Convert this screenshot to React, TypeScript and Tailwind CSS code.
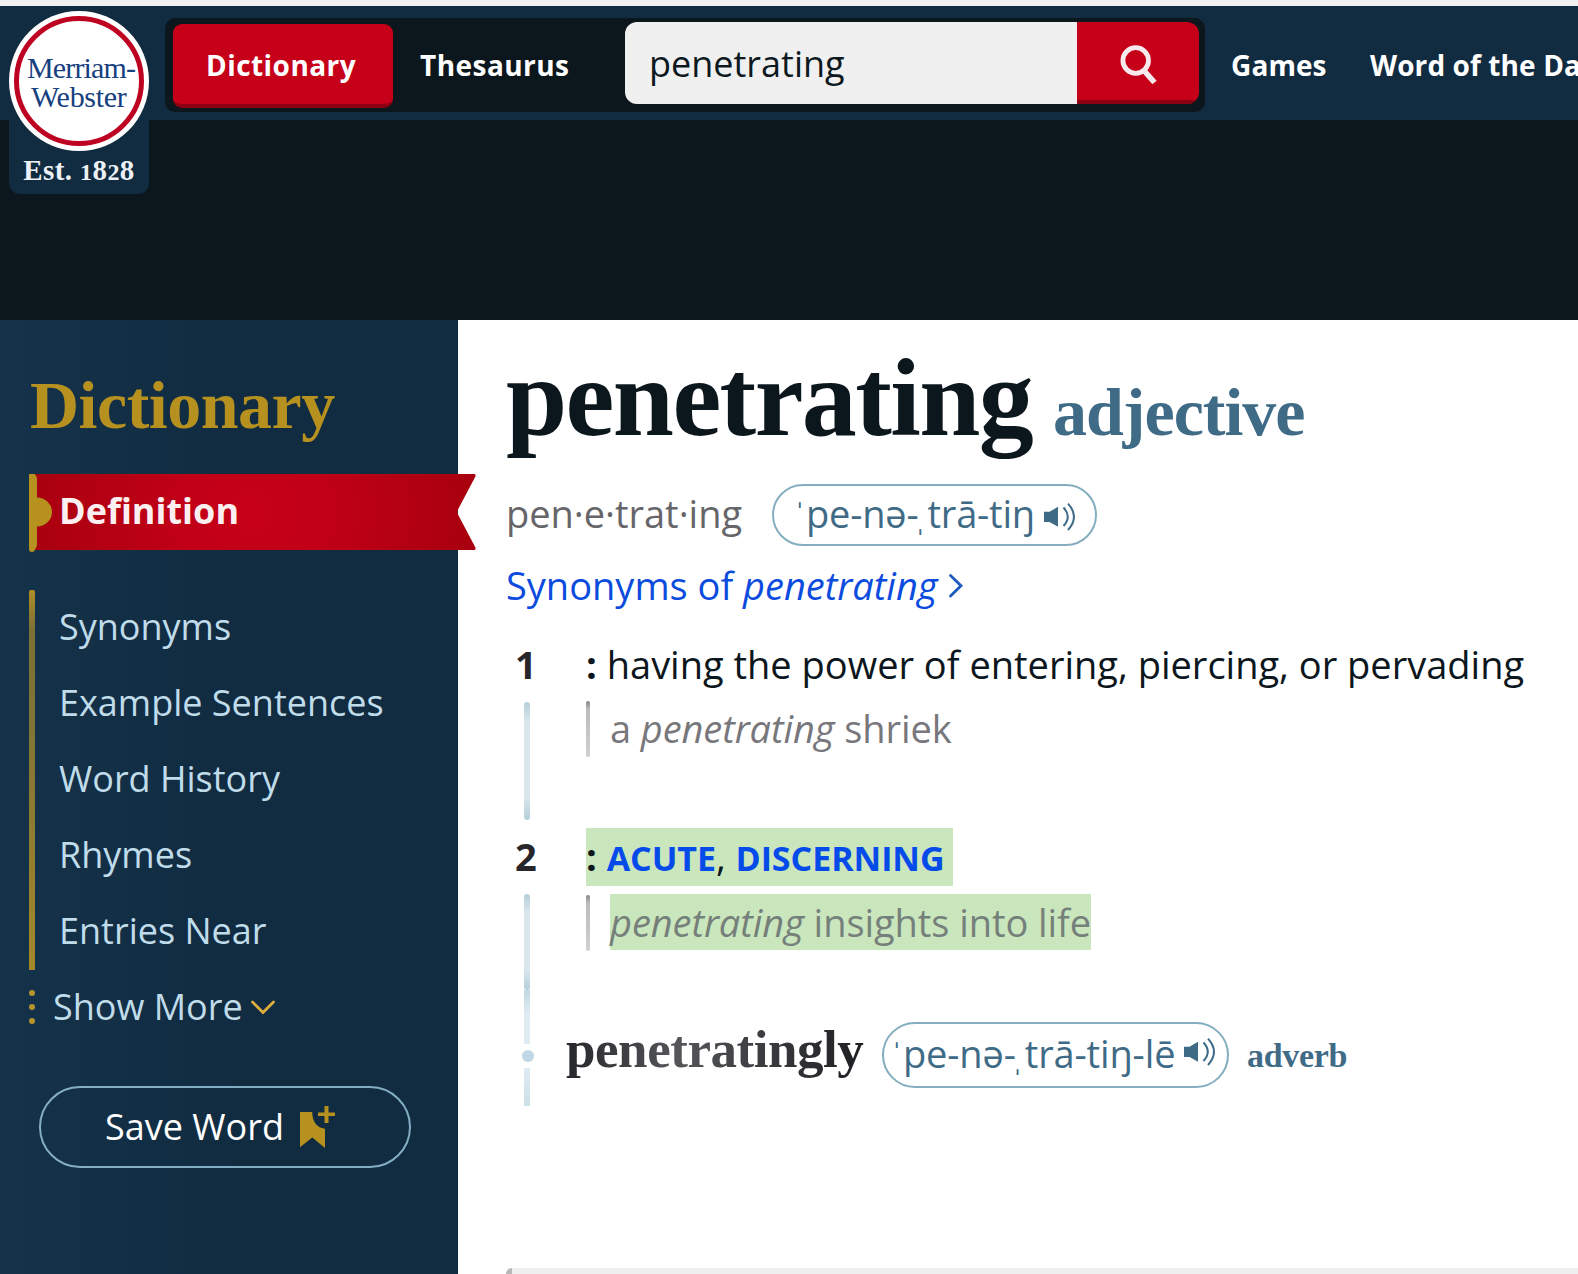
import React from "react";

const sideLinks = ["Synonyms", "Example Sentences", "Word History", "Rhymes", "Entries Near"];

function Speaker({ className }: { className: string }) {
  return (
    <svg className={className} width="34" height="30" viewBox="0 0 34 30" fill="none">
      <path d="M1 9.8H6.5L15 4.8V24.8L6.5 20H1Z" fill="#3f6b87" />
      <path d="M20.5 5.5Q29 14.7 20.5 24" stroke="#3f6b87" strokeWidth="2" />
      <path d="M25 1.6Q37 14.7 25 28" stroke="#3f6b87" strokeWidth="2" />
    </svg>
  );
}

function Pron({ tail }: { tail: string }) {
  return (
    <span>
      <span className="inline-block w-2 align-[9px] text-[22px] leading-none">ˈ</span>pe-nə-
      <span className="inline-block w-[9px] align-[-3px] text-[22px] leading-none">ˌ</span>
      {tail}
    </span>
  );
}

function Logo() {
  return (
    <div className="ml-[9px] flex h-[188px] w-[140px] shrink-0 flex-col items-center rounded-b-[11px] bg-[#112b40] pt-[5px]">
      <div className="flex h-[140px] w-[140px] shrink-0 items-center justify-center rounded-full bg-white">
        <div className="flex h-[130px] w-[130px] flex-col items-start rounded-full border-[5px] border-[#bd0321] pt-[32px] font-['Liberation_Serif',serif] text-[30px] leading-[29px] font-normal whitespace-nowrap text-[#17407f]">
          <span className="ml-[8px] tracking-[-0.85px]">Merriam-</span>
          <span className="ml-[12px] tracking-[-0.3px]">Webster</span>
        </div>
      </div>
      <div className="mt-[1px] whitespace-nowrap font-['Liberation_Serif',serif] text-[29px] leading-[36px] font-bold tracking-[0.4px] text-[#edf1f6]">
        Est. <span className="text-[24px]">1</span>8<span className="text-[24px]">2</span>8
      </div>
    </div>
  );
}

function Header() {
  return (
    <header className="flex h-[114px] shrink-0 items-start bg-[#112b40] text-[28px] font-bold tracking-[0.45px] whitespace-nowrap text-white">
      <Logo />
      <div className="mt-3 ml-4 flex h-[94px] w-[1040px] shrink-0 rounded-[10px] bg-[#0c161d]">
        <div className="mt-[6px] ml-2 h-[84px] w-[220px] rounded-[9px] border-b-4 border-[#8b0012] bg-[#c60018] pt-[1px] pl-[33px] leading-[80px]">
          Dictionary
        </div>
        <div className="mt-[6px] w-[232px] pt-[1px] pl-[27px] leading-[80px]">Thesaurus</div>
        <div className="mt-1 flex h-[82px] w-[574px] overflow-hidden rounded-[12px]">
          <div className="w-[452px] bg-[#f0f0f0] pl-[24px] text-[36px] leading-[84px] font-normal tracking-normal text-[#0d1820]">
            penetrating
          </div>
          <div className="flex-1 border-b-4 border-[#8b0012] bg-[#c60018]">
            <svg width="122" height="78" viewBox="0 0 122 78" fill="none" stroke="#f7e9ec">
              <circle cx="58.7" cy="38.5" r="12.8" strokeWidth="4.8" />
              <path d="M66.5 48L77.500 60.500" strokeWidth="5.6" />
            </svg>
          </div>
        </div>
      </div>
      <div className="mt-[18px] ml-[26px] flex pt-[1px] leading-[80px] tracking-[0.1px]">
        <span className="w-[139px]">Games</span>
        <span>Word of the Day</span>
      </div>
    </header>
  );
}

function Sidebar() {
  return (
    <aside className="relative z-10 flex w-[458px] shrink-0 flex-col bg-linear-to-r from-[#14324a] via-[#112c41] to-[#112b40] text-[36px] whitespace-nowrap text-[#c0dcea]">
      <h2 className="mt-[48px] ml-[30px] font-['Liberation_Serif',serif] text-[68px] leading-[74px] font-bold tracking-[-0.5px] text-[#b6911f]">
        Dictionary
      </h2>
      <div className="relative mt-8 ml-[29px] h-[78px] w-[447px]">
        <svg width="447" height="78" viewBox="0 0 447 78" className="absolute inset-0">
          <defs>
            <radialGradient id="ribbon" gradientUnits="userSpaceOnUse" cx="223" cy="38" r="223">
              <stop offset="0" stopColor="#c60018" />
              <stop offset="0.35" stopColor="#c00017" />
              <stop offset="1" stopColor="#a8000f" />
            </radialGradient>
          </defs>
          <path d="M5 0H445.5Q447 .6 446.4 2.5L429 35.5Q428 38 429 40.5L446.4 73.5Q447 75.6 445.5 76H5Z" fill="url(#ribbon)" />
          <path d="M0 0H5.5Q8 1.5 8 5V23.5A15 14.5 0 0 1 8 52.5V70Q8 73 6 75.5Q5.500 78 3 78Q0 78 0 75Z" fill="#b6911f" />
        </svg>
        <div className="relative pl-[30px] leading-[74px] font-bold text-[#fbeff1]">Definition</div>
      </div>
      <nav className="mt-9 ml-[29px] flex">
        <div className="mt-[2px] h-[380px] w-[6px] rounded-t-[2px] bg-[linear-gradient(to_bottom,#b08d26_0px,#7b7136_40px,#7f7335_120px,#a3872a_380px)]" />
        <ul className="mt-[1px] ml-6">
          {sideLinks.map((t) => (
            <li key={t} className="h-[76px] leading-[76px]">
              {t}
            </li>
          ))}
        </ul>
      </nav>
      <div className="-mt-[1px] ml-[29px] flex h-[76px] items-center leading-[76px]">
        <div className="flex flex-col gap-2">
          <i className="h-[6px] w-[6px] rounded-full bg-[#b6952f]" />
          <i className="h-[6px] w-[6px] rounded-full bg-[#b6952f]" />
          <i className="h-[6px] w-[6px] rounded-full bg-[#b6952f]" />
        </div>
        <span className="w-[196px] pl-[18px]">Show More</span>
        <svg className="ml-[19px]" width="26" height="16" viewBox="0 0 26 16" fill="none" stroke="#d9ae3c" strokeWidth="2.8" strokeLinecap="round">
          <path d="M2.500 3L13 13.500L23.500 3" />
        </svg>
      </div>
      <button className="mt-[41px] ml-[39px] flex h-[82px] w-[372px] rounded-full border-2 border-[#84aec4] pl-[64px] text-left leading-[78px] text-white">
        <span className="w-[194px]">Save Word</span>
        <svg className="mt-[17px]" width="38" height="44" viewBox="0 0 38 44" fill="#b6911f">
          <path d="M1 7H13.200C13.400 16 17 22.500 26 23.800V43L13.300 32.500L1 42.300Z" />
          <path d="M25.500 1H29.500V7.500H36V11H29.500V18H25.500V11H19V7.500H25.500Z" />
        </svg>
      </button>
    </aside>
  );
}

const sans = "font-['Open_Sans','Noto_Sans',sans-serif]";

function Entry() {
  return (
    <main className="flex min-w-0 flex-1 flex-col bg-white pl-12 text-[38px] whitespace-nowrap text-[#0c161d]">
      <div className="mt-[23px] flex h-[110px] items-baseline font-['Liberation_Serif',serif] font-bold">
        <h1 className="w-[547px] text-[110px] leading-[110px] tracking-[-1.6px]">penetrating</h1>
        <span className="text-[68px] leading-[68px] tracking-[-1px] text-[#3f6b87]">adjective</span>
      </div>
      <div className="mt-[31px] flex h-[62px] items-center">
        <div className="w-[266px] pb-[3px] tracking-[-0.03px] text-[#66666a]">pen·e·trat·ing</div>
        <div className="flex h-[62px] w-[325px] items-center rounded-full border-2 border-[#84aec0] pl-6 leading-[56px] tracking-[-0.2px] text-[#3f6b87]">
          <div className="-mt-[5px] w-[245px]">
            <Pron tail="trā-tiŋ" />
          </div>
          <Speaker className="mt-[3px]" />
        </div>
      </div>
      <div className="mt-2 flex h-[60px] leading-[62px] text-[#0b4bdd]">
        <span>
          Synonyms of <em>penetrating</em>
        </span>
        <svg className="mt-[18px] ml-[9px]" width="18" height="28" viewBox="0 0 18 28" fill="none" stroke="#1b5bbd" strokeWidth="2.8" strokeLinecap="round">
          <path d="M3.500 3.500L14 13.700L3.500 24" />
        </svg>
      </div>

      <div className="mt-[22px] flex h-[192px]">
        <div className="flex w-20 flex-col">
          <div className="h-[58px] pl-[9px] leading-[56px] font-bold text-[#27272b]">1</div>
          <div className="my-2 ml-[18px] w-[6px] flex-1 rounded-full bg-[linear-gradient(to_bottom,#b3cfda,#d9e6ec_20px,#d9e6ec_95px,#b3cfda)]" />
        </div>
        <div>
          <p className="h-[58px] leading-[56px]">
            <b>:</b> having the power of entering, piercing, or pervading
          </p>
          <div className="mt-[6px] flex leading-[57px] tracking-[-0.08px] text-[#77777c]">
            <div className="mt-[1px] h-14 w-1 rounded-full bg-[linear-gradient(to_bottom,#858585,#bcbcbc_8px,#d0d0d0)]" />
            <span className="ml-5">
              a <em>penetrating</em> shriek
            </span>
          </div>
        </div>
      </div>

      <div className="flex h-[162px]">
        <div className="flex w-20 flex-col">
          <div className="h-[58px] pl-[9px] leading-[56px] font-bold text-[#27272b]">2</div>
          <div className="mt-2 ml-[18px] w-[6px] flex-1 rounded-full bg-[linear-gradient(to_bottom,#b3cfda,#d9e6ec_18px,#d9e6ec_76px,#b3cfda)]" />
        </div>
        <div>
          <p className="h-[58px] w-[367px] bg-[#cae6bd] leading-[56px] tracking-[-0.05px]">
            <b>:</b> <b className="text-[34px] text-[#044bea]">ACUTE</b>, <b className="text-[34px] text-[#044bea]">DISCERNING</b>
          </p>
          <div className="mt-2 flex leading-[56px] tracking-[-0.06px] text-[#76807b]">
            <div className="mt-[1px] h-14 w-1 rounded-full bg-[linear-gradient(to_bottom,#858585,#bcbcbc_8px,#d0d0d0)]" />
            <span className="ml-5 h-14 w-[481px] bg-[#cae6bd]">
              <em>penetrating</em> insights into life
            </span>
          </div>
        </div>
      </div>

      <div className="flex h-[116px]">
        <div className="flex w-[60px] flex-col">
          <div className="ml-[18px] h-[54px] w-[6px] bg-[linear-gradient(to_bottom,#bfd9e3,#e0ebf2_24px,#e0ebf2)]" />
          <div className="my-[6px] ml-4 h-3 w-3 rounded-full bg-[#c0d8e6]" />
          <div className="ml-[18px] h-[38px] w-[6px] bg-linear-to-b from-[#e0ebf2] to-[#cbdfe6]" />
        </div>
        <div className="mt-8 flex h-[66px] items-center">
          <h3 className="w-[316px] bg-[linear-gradient(to_right,#26272b_0px,#55565a_110px,#202125_290px)] bg-clip-text pb-3 font-['Liberation_Serif',serif] text-[53px] leading-[60px] font-bold tracking-[-0.45px] text-transparent">
            penetratingly
          </h3>
          <div className="flex h-[66px] w-[347px] items-center rounded-full border-2 border-[#84aec0] pl-[11px] leading-[56px] tracking-[-0.15px] text-[#3f6b87]">
            <div className="-mt-[5px] w-[288px]">
              <Pron tail="trā-tiŋ-lē" />
            </div>
            <Speaker className="-mt-[6px]" />
          </div>
          <span className="ml-[18px] font-['Liberation_Serif',serif] text-[34px] font-bold tracking-[-0.3px] text-[#3f6b87]">adverb</span>
        </div>
      </div>
      <div className="mt-[162px] h-[6px] shrink-0 rounded-tl-[6px] border-l-[6px] border-[#b8b8b8] bg-[#efefef]" />
    </main>
  );
}

export default function App() {
  return (
    <div className={`${sans} flex h-[1274px] w-full flex-col overflow-hidden bg-[#0c161d]`}>
      <div className="h-[6px] shrink-0 bg-[#f1f1f1]" />
      <Header />
      <div className="h-[200px] shrink-0" />
      <div className="flex min-h-0 flex-1">
        <Sidebar />
        <Entry />
      </div>
    </div>
  );
}
